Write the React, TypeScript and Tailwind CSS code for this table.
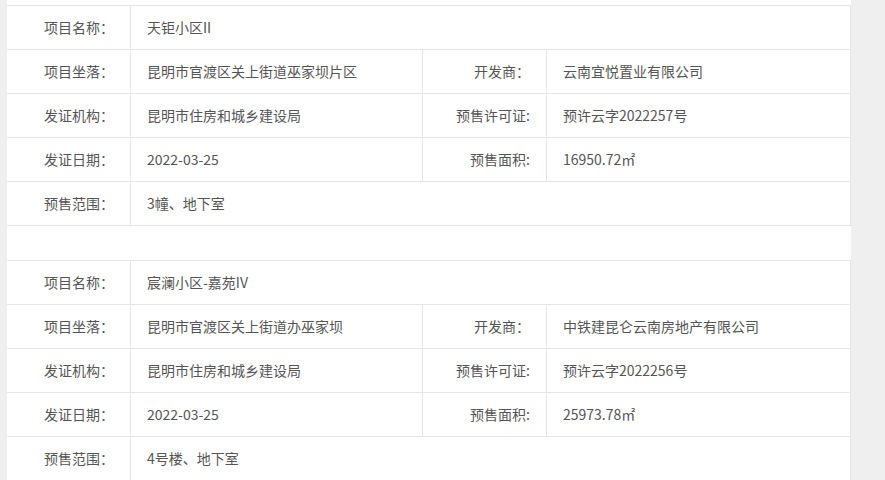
const projects = [
  {
    name: "天钜小区II",
    location: "昆明市官渡区关上街道巫家坝片区",
    developer: "云南宜悦置业有限公司",
    agency: "昆明市住房和城乡建设局",
    permit: "预许云字2022257号",
    date: "2022-03-25",
    area: "16950.72㎡",
    scope: "3幢、地下室",
  },
  {
    name: "宸澜小区-嘉苑IV",
    location: "昆明市官渡区关上街道办巫家坝",
    developer: "中铁建昆仑云南房地产有限公司",
    agency: "昆明市住房和城乡建设局",
    permit: "预许云字2022256号",
    date: "2022-03-25",
    area: "25973.78㎡",
    scope: "4号楼、地下室",
  },
];

const Label = ({ children, w }: { children: React.ReactNode; w: string }) => (
  <div className={`${w} shrink-0 flex items-center justify-end pr-4 border-r border-[#e6e6e6]`}>
    {children}
  </div>
);

const Value = ({ children, w }: { children: React.ReactNode; w: string }) => (
  <div className={`${w} shrink-0 flex items-center pl-4 border-r border-[#e6e6e6]`}>
    {children}
  </div>
);

const ProjectTable = ({ p }: { p: (typeof projects)[number] }) => {
  const row = "flex h-[44px] border-b border-[#e6e6e6]";
  return (
    <div className="border-t border-[#e6e6e6]">
      <div className={row}>
        <Label w="w-[124px]">项目名称：</Label>
        <Value w="w-[720px]">{p.name}</Value>
      </div>
      <div className={row}>
        <Label w="w-[124px]">项目坐落：</Label>
        <Value w="w-[292px]">{p.location}</Value>
        <Label w="w-[124px]">开发商：</Label>
        <Value w="w-[304px]">{p.developer}</Value>
      </div>
      <div className={row}>
        <Label w="w-[124px]">发证机构：</Label>
        <Value w="w-[292px]">{p.agency}</Value>
        <Label w="w-[124px]">预售许可证:</Label>
        <Value w="w-[304px]">{p.permit}</Value>
      </div>
      <div className={row}>
        <Label w="w-[124px]">发证日期：</Label>
        <Value w="w-[292px]">{p.date}</Value>
        <Label w="w-[124px]">预售面积:</Label>
        <Value w="w-[304px]">{p.area}</Value>
      </div>
      <div className={row}>
        <Label w="w-[124px]">预售范围：</Label>
        <Value w="w-[720px]">{p.scope}</Value>
      </div>
    </div>
  );
};

export default function App() {
  return (
    <div
      className="min-h-screen bg-[#efefef] text-[14px] text-[#555]"
      style={{ fontFamily: '"Microsoft YaHei", "Noto Sans CJK SC", sans-serif' }}
    >
      <div className="ml-[7px] w-[844px] bg-white pt-[5px] flex flex-col gap-[34px]">
        {projects.map((p) => (
          <ProjectTable key={p.permit} p={p} />
        ))}
      </div>
    </div>
  );
}
